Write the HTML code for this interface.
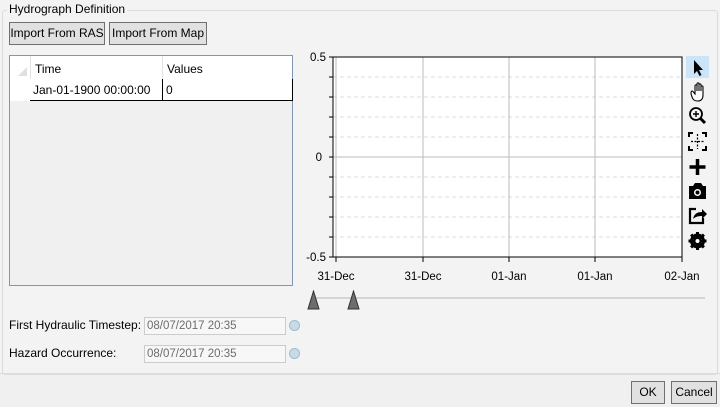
<!DOCTYPE html>
<html><head><style>
body{margin:0;width:720px;height:407px;background:#f0f0f0;font-family:"Liberation Sans",sans-serif;font-size:12px;color:#000;position:relative;overflow:hidden}
.a{position:absolute}
.btn{position:absolute;background:#e1e1e1;border:1px solid #adadad;box-sizing:border-box;text-align:center;line-height:20px;font-size:12px}
.inp{position:absolute;background:#f7f7f7;border:1px solid #ccc;box-sizing:border-box;color:#6d6d6d;font-size:11.5px;line-height:16px;padding-left:2px}
.dot{position:absolute;width:11px;height:11px;border-radius:50%;background:#c7dce6;border:1px solid #9fbccb;box-sizing:border-box}
.tl{position:absolute;font-size:11px}
</style></head><body>
<div class="a" style="left:0;top:0;width:720px;height:374px;background:#f3f3f3"></div>
<div class="a" style="left:2px;top:10px;width:714px;height:363px;border:1px solid #dcdcdc;border-radius:3px"></div>
<div class="a" style="left:7px;top:2px;padding:0 2px;background:#f3f3f3;font-size:12px;line-height:14px">Hydrograph Definition</div>
<div class="btn" style="left:9px;top:22px;width:96px;height:23px;border-color:#707070">Import From RAS</div>
<div class="btn" style="left:109px;top:22px;width:98px;height:23px;border-color:#707070">Import From Map</div>
<!-- table -->
<div class="a" style="left:9px;top:55px;width:284px;height:231px;border:1px solid #8197b3;box-sizing:border-box;background:#f0f0f0"></div>
<div class="a" style="left:10px;top:56px;width:282px;height:23px;background:#fff;border-bottom:1px solid #e3e3e3"></div>
<div class="a" style="left:10px;top:56px;width:20px;height:45px;background:#fff;border-right:1px solid #e3e3e3"></div>
<div class="a" style="left:18px;top:67px;width:0;height:0;border-left:9px solid transparent;border-bottom:9px solid #e0e0e0"></div>
<div class="a" style="left:162px;top:56px;width:1px;height:23px;background:#e3e3e3"></div>
<div class="a" style="left:35px;top:62px">Time</div>
<div class="a" style="left:167px;top:62px">Values</div>
<div class="a" style="left:30px;top:79px;width:262px;height:21px;background:#fff;border-bottom:1px solid #000;border-right:1px solid #000"></div>
<div class="a" style="left:162px;top:79px;width:1px;height:22px;background:#000"></div>
<div class="a" style="left:33px;top:83px">Jan-01-1900 00:00:00</div>
<div class="a" style="left:166px;top:83px">0</div>
<!-- chart -->
<svg class="a" style="left:295px;top:45px" width="425" height="235">
<rect x="38" y="12" width="349" height="200" fill="#fff"/>
<g stroke="#ddd" stroke-dasharray="4,3">
<line x1="38" y1="32" x2="387" y2="32"/><line x1="38" y1="52" x2="387" y2="52"/><line x1="38" y1="72" x2="387" y2="72"/><line x1="38" y1="92" x2="387" y2="92"/>
<line x1="38" y1="132" x2="387" y2="132"/><line x1="38" y1="152" x2="387" y2="152"/><line x1="38" y1="172" x2="387" y2="172"/><line x1="38" y1="192" x2="387" y2="192"/>
</g>
<g stroke="#bbb"><line x1="41" y1="12" x2="41" y2="212"/><line x1="128" y1="12" x2="128" y2="212"/><line x1="214" y1="12" x2="214" y2="212"/><line x1="300" y1="12" x2="300" y2="212"/><line x1="38" y1="112" x2="387" y2="112"/></g>
<rect x="38" y="12" width="349" height="200" fill="none" stroke="#000"/>
<g stroke="#000"><line x1="34" y1="12" x2="38" y2="12"/><line x1="34" y1="52" x2="38" y2="52"/><line x1="34" y1="72" x2="38" y2="72"/><line x1="34" y1="32" x2="38" y2="32"/><line x1="34" y1="92" x2="38" y2="92"/><line x1="34" y1="112" x2="38" y2="112"/><line x1="34" y1="132" x2="38" y2="132"/><line x1="34" y1="152" x2="38" y2="152"/><line x1="34" y1="172" x2="38" y2="172"/><line x1="34" y1="192" x2="38" y2="192"/><line x1="34" y1="212" x2="38" y2="212"/>
<line x1="41" y1="212" x2="41" y2="217"/><line x1="128" y1="212" x2="128" y2="217"/><line x1="214" y1="212" x2="214" y2="217"/><line x1="300" y1="212" x2="300" y2="217"/><line x1="387" y1="212" x2="387" y2="217"/></g>
<g font-family="Liberation Sans" font-size="11.5" text-anchor="end"><text x="31" y="16">0.5</text><text x="27" y="116">0</text><text x="31" y="216">-0.5</text></g>
<g font-family="Liberation Sans" font-size="11.5" text-anchor="middle"><text x="41" y="235">31-Dec</text><text x="128" y="235">31-Dec</text><text x="214" y="235">01-Jan</text><text x="300" y="235">01-Jan</text><text x="387" y="235">02-Jan</text></g>
</svg>
<!-- toolbar -->
<svg class="a" style="left:685px;top:55px" width="26" height="200">
<rect x="1" y="1" width="23" height="22" fill="#cce4f7"/>
<path d="M9 5 L9 19 L12 16 L14.5 21 L16.5 20 L14 15 L18 15 Z" fill="#000"/>
<path d="M8 44 C6 40 5 37 7 36 C8 36 9 38 10 39 L10 31 C10 29.5 12 29.5 12 31 L12 36 L12 29 C12 27.5 14 27.5 14 29 L14 36 L14 30 C14 28.5 16 28.5 16 30 L16 36 L16 32 C16 30.5 18 30.5 18 32 L18 40 C18 44 16 46 13 46 C11 46 9 45.5 8 44Z" fill="#fff" stroke="#000" stroke-width="1.1"/>
<circle cx="11" cy="59" r="6" fill="none" stroke="#000" stroke-width="1.8"/><path d="M15.5 63.5 L20 68" stroke="#000" stroke-width="3"/><path d="M8 59h6M11 56v6" stroke="#000" stroke-width="1.4"/>
<path d="M4 82v-4h4M17 78h4v4M21 91v4h-4M8 95h-4v-4" fill="none" stroke="#000" stroke-width="2"/><path d="M12.5 79v15M6 86.5h13" stroke="#000" stroke-width="1.2" stroke-dasharray="2,1.5"/>
<path d="M12.5 104v16M4.5 112h16" stroke="#000" stroke-width="3.5"/>
<path d="M4 131h4l2-3h6l2 3h3v13h-17z" fill="#000"/><circle cx="12.5" cy="137.5" r="3.5" fill="#fff"/><circle cx="12.5" cy="137.5" r="2" fill="#000"/>
<path d="M11 154h-6v14h13v-5" fill="none" stroke="#000" stroke-width="2.2"/><path d="M8 164c1-5 4-7 9-7v-3l5 5-5 5v-3c-4 0-7 1-9 3z" fill="#000"/>
<g transform="translate(12.5 186)"><circle r="6" fill="none" stroke="#000" stroke-width="3"/><g stroke="#000" stroke-width="3"><path d="M0 -9v18M-9 0h18M-6.4 -6.4l12.8 12.8M6.4 -6.4l-12.8 12.8"/></g><circle r="2" fill="#fff"/></g>
</svg>
<!-- slider -->
<div class="a" style="left:313px;top:297px;width:392px;height:2px;background:#d5d5d5"></div>
<svg class="a" style="left:307px;top:290px" width="55" height="20"><path d="M1 19 L6.5 1 L12 19Z M41 19 L46.5 1 L52 19Z" fill="#6d6d6d" stroke="#333"/></svg>
<!-- fields -->
<div class="a" style="left:9px;top:318px">First Hydraulic Timestep:</div>
<div class="inp" style="left:144px;top:317px;width:142px;height:18px">08/07/2017 20:35</div>
<div class="dot" style="left:289px;top:320px"></div>
<div class="a" style="left:9px;top:346px">Hazard Occurrence:</div>
<div class="inp" style="left:144px;top:345px;width:142px;height:18px">08/07/2017 20:35</div>
<div class="dot" style="left:289px;top:348px"></div>
<div class="a" style="left:0;top:373px;width:720px;height:1px;background:#dcdcdc"></div>
<div class="btn" style="left:631px;top:381px;width:34px;height:23px;border-color:#707070">OK</div>
<div class="btn" style="left:671px;top:381px;width:46px;height:23px;border-color:#707070">Cancel</div>
</body></html>
